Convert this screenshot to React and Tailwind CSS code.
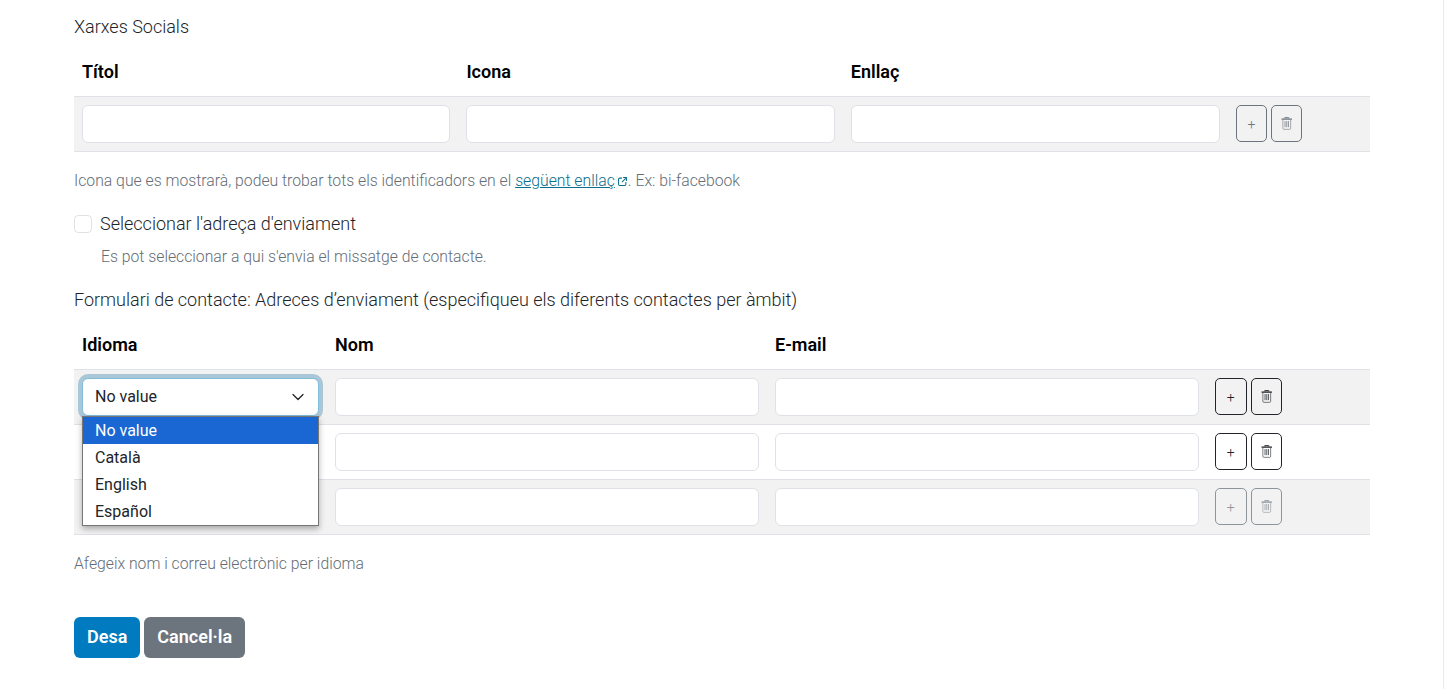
import { ChevronDown } from "lucide-react";

function TrashIcon({ className }) {
  return (
    <svg viewBox="0 0 14 16" className={className} fill="none" stroke="currentColor">
      <path d="M.6 2.6h12.8" strokeWidth="1.6" />
      <path d="M4.5 1.6V.8h5v.8" strokeWidth="1.2" />
      <path d="M2.2 3.5v10.4c0 .7.5 1.3 1.2 1.3h7.2c.7 0 1.2-.6 1.2-1.3V3.5" strokeWidth="1.2" opacity="0.6" />
      <path d="M4.9 5v7.5M7 5v7.5M9.1 5v7.5" strokeWidth="0.9" />
    </svg>
  );
}

function TextInput() {
  return <div className="h-[38px] rounded-md border border-[#dee2e6] bg-white" />;
}

function RowButtons({ muted, faded, wide }) {
  const cls = muted ? "border-[#6c757d] text-[#6c757d]" : "border-[#212529] text-[#212529]";
  const width = wide ? "w-[31.5px]" : "w-[31.3px]";
  return (
    <div className={`flex gap-1 ${faded ? "opacity-75" : ""}`}>
      <button className={`flex h-[37px] ${width} items-center justify-center rounded-[5px] border ${cls}`}>
        <span className="text-[14px] leading-none">+</span>
      </button>
      <button className={`flex h-[37px] ${width} items-center justify-center rounded-[5px] border ${cls}`}>
        <TrashIcon className="h-[13px] w-[11.5px]" />
      </button>
    </div>
  );
}

function SelectBox({ focused, children }) {
  return (
    <div
      className={`flex h-[38px] items-center justify-between rounded-md border bg-white pl-3 pr-[10px] text-base font-normal text-[#212529] ${
        focused ? "border-[#80bdda] shadow-[0_0_0_4px_rgba(0,100,150,0.3)]" : "border-[#dee2e6]"
      }`}
    >
      <span>{children}</span>
      <ChevronDown size={20} strokeWidth={1.5} />
    </div>
  );
}

function HeaderCell({ children }) {
  return <div className="px-2 pb-[11px] text-[18px] font-semibold leading-[27px] text-black">{children}</div>;
}

export default function App() {
  return (
    <div className="min-h-[689px] overflow-hidden border-r border-[#e9ecef] bg-white pl-[74px] pr-[73px] pt-[13px] font-['Roboto',sans-serif] font-light text-[#212529]">
      <div className="text-[18px] leading-[27px]">Xarxes Socials</div>

      <div className="mt-[18px] grid grid-cols-[384.4px_384.4px_385px_1fr]">
        <HeaderCell>Títol</HeaderCell>
        <HeaderCell>Icona</HeaderCell>
        <HeaderCell>Enllaç</HeaderCell>
        <HeaderCell />
      </div>
      <div className="grid grid-cols-[384.4px_384.4px_385px_1fr] border-y border-[#dee2e6] bg-[#f2f2f2]">
        <div className="p-2"><TextInput /></div>
        <div className="p-2"><TextInput /></div>
        <div className="p-2"><TextInput /></div>
        <div className="p-2"><RowButtons muted /></div>
      </div>

      <div className="mt-[17px] text-[15.75px] leading-[24px] text-[#646d75]">
        Icona que es mostrarà, podeu trobar tots els identificadors en el{" "}
        <a className="text-[#0a6f8c] underline">següent enllaç</a>
        <svg viewBox="0 0 16 16" className="ml-[3px] mr-[1px] inline-block h-[9px] w-[9px] text-[#0a6f8c]" fill="none" stroke="currentColor" strokeWidth="1.8">
          <path d="M7 2H3a2 2 0 0 0-2 2v9a2 2 0 0 0 2 2h9a2 2 0 0 0 2-2V9" />
          <path d="M9 1h6v6M15 1L7 9" />
        </svg>
        . Ex: bi-facebook
      </div>

      <div className="mt-[17px] flex items-center gap-2 leading-[27px]">
        <div className="h-[18px] w-[18px] rounded border border-[#dee2e6] bg-white" />
        <span className="text-[18px]">Seleccionar l'adreça d'enviament</span>
      </div>
      <div className="mt-[8px] pl-[27px] text-[15.75px] leading-[24px] text-[#646d75]">
        Es pot seleccionar a qui s'envia el missatge de contacte.
      </div>

      <div className="mt-[17px] text-[18px] leading-[27px]">
        Formulari de contacte: Adreces d’enviament (especifiqueu els diferents contactes per àmbit)
      </div>

      <div className="mt-[18px] grid grid-cols-[253px_440px_440px_1fr]">
        <HeaderCell>Idioma</HeaderCell>
        <HeaderCell>Nom</HeaderCell>
        <HeaderCell>E-mail</HeaderCell>
        <HeaderCell />
      </div>
      <div className="relative">
        {[0, 1, 2].map((i) => (
          <div
            key={i}
            className={`grid grid-cols-[253px_440px_440px_1fr] border-b border-[#dee2e6] ${
              i === 0 ? "border-t" : ""
            } ${i === 1 ? "bg-white" : "bg-[#f2f2f2]"}`}
          >
            <div className="p-2">{i === 0 ? <SelectBox focused>No value</SelectBox> : <SelectBox />}</div>
            <div className="p-2"><TextInput /></div>
            <div className="p-2"><TextInput /></div>
            <div className="p-2"><RowButtons wide muted={i === 2} faded={i === 2} /></div>
          </div>
        ))}
        <div className="absolute left-2 top-[47px] w-[237px] border border-[#767676] bg-white text-base font-normal text-[#212529] shadow-[0_3px_6px_rgba(0,0,0,0.3)]">
          <div className="h-[27px] bg-[#1a66d2] pl-3 leading-[27px] text-white">No value</div>
          <div className="h-[27px] pl-3 leading-[27px]">Català</div>
          <div className="h-[27px] pl-3 leading-[27px]">English</div>
          <div className="h-[27px] pl-3 leading-[27px]">Español</div>
        </div>
      </div>

      <div className="mt-[17px] text-[15.75px] leading-[24px] text-[#646d75]">
        Afegeix nom i correu electrònic per idioma
      </div>

      <div className="mt-[41px] flex gap-1">
        <button className="h-[41px] rounded-md bg-[#007bc0] px-[13px] pb-[2px] text-[18px] font-semibold text-white">Desa</button>
        <button className="h-[41px] rounded-md bg-[#6c757d] px-[13px] pb-[2px] text-[18px] font-semibold text-white">Cancel·la</button>
      </div>
    </div>
  );
}
